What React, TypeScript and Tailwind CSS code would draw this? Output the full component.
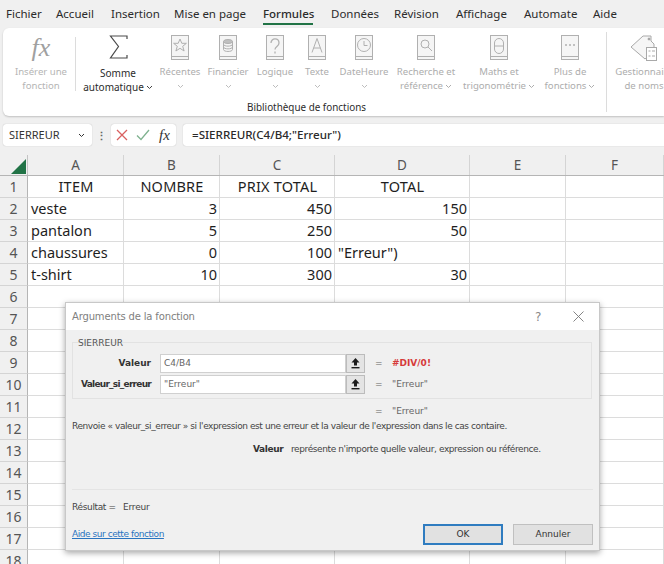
import React from "react";

const FONT = "[font-family:'Noto_Sans','Open_Sans',sans-serif]";
const SERIF = "[font-family:'Liberation_Serif',serif]";
const TAHOMA = "[font-family:'DejaVu_Sans','Noto_Sans',sans-serif]";

function Chevron({ className = "" }: { className?: string }) {
  return (
    <svg width="7" height="5" viewBox="0 0 7 5" className={className} fill="none" stroke="currentColor" strokeWidth="1">
      <path d="M1 1l2.5 2.5L6 1" />
    </svg>
  );
}

function Book({ children }: { children?: React.ReactNode }) {
  return (
    <svg width="20" height="26" viewBox="0 0 20 26" fill="none" stroke="#b0b0b0" strokeWidth="1">
      <rect x="1.5" y="0.5" width="17" height="24" fill="#f5f5f5" />
      <path d="M1.5 21.5h17" />
      {children}
    </svg>
  );
}

const tabs: [string, string][] = [
  ["Fichier", "w-[50px]"],
  ["Accueil", "w-[55px]"],
  ["Insertion", "w-[63px]"],
  ["Mise en page", "w-[89px]"],
  ["Formules", "w-[68px]"],
  ["Données", "w-[63px]"],
  ["Révision", "w-[62px]"],
  ["Affichage", "w-[68px]"],
  ["Automate", "w-[69px]"],
  ["Aide", "w-[40px]"],
];

function Lib({
  w,
  icon,
  l1,
  l2,
  caret,
}: {
  w: string;
  icon: React.ReactNode;
  l1: string;
  l2?: string;
  caret?: boolean;
}) {
  return (
    <div className={`${w} flex flex-col items-center shrink-0 pt-[7px] text-[9.6px] leading-[14px] text-[#adadad] whitespace-nowrap`}>
      <div className="h-[26px] flex items-center justify-center">{icon}</div>
      <div className="mt-[4px]">{l1}</div>
      {l2 ? (
        <div className="flex items-center gap-[2px]">
          {l2}
          {caret && <Chevron className="text-[#adadad]" />}
        </div>
      ) : (
        <Chevron className="mt-[5px] text-[#bdbdbd]" />
      )}
    </div>
  );
}

const cols = ["w-[96px]", "w-[96px]", "w-[115px]", "w-[135px]", "w-[96px]", "w-[98px]"];
const rows: [string, string, string, string][] = [
  ["ITEM", "NOMBRE", "PRIX TOTAL", "TOTAL"],
  ["veste", "3", "450", "150"],
  ["pantalon", "5", "250", "50"],
  ["chaussures", "0", "100", "\"Erreur\")"],
  ["t-shirt", "10", "300", "30"],
];

function UpBtn() {
  return (
    <div className="w-[19px] h-[19px] bg-[#e4e4e4] border border-[#bcbcbc] flex items-center justify-center shrink-0">
      <svg width="9" height="11" viewBox="0 0 9 11" fill="#1c1c1c">
        <path d="M4.5 0L8.5 4.5H6V7.5H3V4.5H0.5Z" />
        <rect x="0.5" y="9" width="8" height="1.4" />
      </svg>
    </div>
  );
}

export default function App() {
  return (
    <div className={`relative w-[664px] h-[564px] overflow-hidden bg-[#f0f0f0] ${FONT}`}>
      {/* tabs */}
      <div className="flex h-[28px] pl-[6px] text-[11.5px] text-[#2b2b2b] items-center">
        {tabs.map(([t, w]) => (
          <div key={t} className={`${w} shrink-0 relative h-full flex items-center`}>
            <span className={t === "Formules" ? "font-medium" : ""}>{t}</span>
            {t === "Formules" && <div className="absolute left-0 bottom-[3px] w-[50px] h-[2px] bg-[#217346]" />}
          </div>
        ))}
      </div>

      {/* ribbon */}
      <div className="ml-[3px] h-[88px] bg-white rounded-l-[6px] flex relative shadow-[0_1px_2px_rgba(0,0,0,0.2)]">
        <div className="w-[72px] pl-[4px] flex flex-col items-center shrink-0 pt-[7px] text-[9.6px] leading-[14px] text-[#b5b5b5]">
          <div className={`h-[26px] text-[26px] leading-[26px] italic text-[#a0a0a0] ${SERIF}`}>fx</div>
          <div className="mt-[4px]">Insérer une</div>
          <div>fonction</div>
        </div>
        <div className="w-px h-[54px] mt-[9px] bg-[#dcdcdc] shrink-0" />
        <div className="w-[84px] flex flex-col items-center shrink-0 pt-[7px] text-[10px] leading-[14px] text-[#2b2b2b]">
          <svg width="19" height="24" viewBox="0 0 19 24" fill="none" stroke="#4a4a4a" strokeWidth="1.2">
            <path d="M18 4V1H1.500l8 10.500L1.500 23H18v-3" />
          </svg>
          <div className="mt-[7px]">Somme</div>
          <div className="flex items-center gap-[2px]">
            automatique
            <Chevron className="text-[#444]" />
          </div>
        </div>
        <Lib
          w="w-[40px]"
          l1="Récentes"
          icon={
            <Book>
              <path d="M10 4l1.800 4.300h4.600l-3.700 3 1.400 4.700L10 13.300 5.900 16l1.400-4.700-3.700-3h4.600z" />
            </Book>
          }
        />
        <Lib
          w="w-[56px]"
          l1="Financier"
          icon={
            <Book>
              <ellipse cx="10" cy="6.500" rx="4.500" ry="2" fill="#c0c0c0" />
              <path d="M5.500 6.500v8c0 2.600 9 2.600 9 0v-8M5.500 9.200c0 2.600 9 2.600 9 0M5.500 11.900c0 2.600 9 2.600 9 0" />
            </Book>
          }
        />
        <Lib
          w="w-[38px]"
          l1="Logique"
          icon={
            <Book>
              <path d="M6 8C6 2.500 14 2.500 14 8c0 3.500-4 3.500-4 6.500M10 16.500v2" strokeWidth="1.300" />
            </Book>
          }
        />
        <Lib
          w="w-[46px]"
          l1="Texte"
          icon={
            <Book>
              <path d="M5 17.500L10 3.500l5 14M6.800 13h6.400" />
            </Book>
          }
        />
        <Lib
          w="w-[48px]"
          l1="DateHeure"
          icon={
            <Book>
              <circle cx="10" cy="10" r="6.500" />
              <path d="M10 6v4.500h3.500" />
            </Book>
          }
        />
        <Lib
          w="w-[76px]"
          l1="Recherche et"
          l2="référence"
          caret
          icon={
            <Book>
              <circle cx="9" cy="9" r="4" />
              <path d="M12 12l4 4" />
            </Book>
          }
        />
        <Lib
          w="w-[70px]"
          l1="Maths et"
          l2="trigonométrie"
          caret
          icon={
            <Book>
              <rect x="5.500" y="3.500" width="9" height="15" rx="4.500" />
              <path d="M5.500 11h9" />
            </Book>
          }
        />
        <Lib
          w="w-[72px]"
          l1="Plus de"
          l2="fonctions"
          caret
          icon={
            <Book>
              <path d="M5 10h2M9 10h2M13 10h2" strokeWidth="1.500" />
            </Book>
          }
        />
        <div className="w-px h-[80px] mt-[4px] bg-[#dcdcdc] shrink-0" />
        <div className="w-[66px] pl-[8px] flex flex-col items-center shrink-0 pt-[7px] text-[9.6px] leading-[14px] text-[#adadad] whitespace-nowrap">
          <svg width="28" height="26" viewBox="0 0 28 26" fill="none" stroke="#a9a9a9" strokeWidth="1">
            <path d="M1 12L13 1h8v5l3 3v7l-9 8z" fill="#f6f6f6" />
            <circle cx="19" cy="4" r="1" fill="#888" />
            <rect x="16.500" y="12.500" width="10" height="13" fill="#fff" />
            <path d="M18.500 16h2M22 16h3M18.500 21h2M22 21h3" />
          </svg>
          <div className="mt-[4px]">Gestionnaire</div>
          <div>de noms</div>
        </div>
        <div className="absolute left-[244px] top-[72px] text-[9.900px] leading-[14px] text-[#2b2b2b]">Bibliothèque de fonctions</div>
      </div>

      {/* formula bar */}
      <div className="flex items-center h-[22px] mt-[8px] pl-[3px] text-[11px] text-[#333]">
        <div className="w-[89px] h-full bg-white rounded-[3px] shadow-[0_0_1px_rgba(0,0,0,0.3)] flex items-center justify-between pl-[6px] pr-[7px] shrink-0">
          SIERREUR
          <Chevron className="text-[#333]" />
        </div>
        <div className="w-[19px] text-center text-[#666] font-bold leading-none shrink-0">⋮</div>
        <div className="w-[65px] h-full bg-white rounded-[3px] shadow-[0_0_1px_rgba(0,0,0,0.3)] flex items-center shrink-0">
          <svg width="12" height="12" viewBox="0 0 12 12" className="ml-[5px]" stroke="#d9605f" strokeWidth="1.300" fill="none">
            <path d="M1 1l10 10M11 1L1 11" />
          </svg>
          <svg width="14" height="12" viewBox="0 0 14 12" className="ml-[8px]" stroke="#7fb28f" strokeWidth="1.300" fill="none">
            <path d="M1 6.500l4 4L13 1" />
          </svg>
          <span className={`ml-[9px] text-[15px] italic text-[#333] ${SERIF}`}>fx</span>
        </div>
        <div className="w-[7px] shrink-0" />
        <div className="flex-1 h-full bg-white rounded-l-[3px] shadow-[0_0_1px_rgba(0,0,0,0.3)] flex items-center pl-[9px] text-[11.600px] font-medium text-[#2a2a2a]">
          =SIERREUR(C4/B4;"Erreur")
        </div>
      </div>

      {/* sheet */}
      <div className="mt-[9px] bg-white text-[14.500px] text-[#1e1e1e]">
        <div className="flex h-[21px] bg-[#f0f0f0] border-b border-[#b5b5b5] text-[13.500px] text-[#555]">
          <div className="w-[28px] shrink-0 border-r border-[#c4c4c4] flex items-end justify-end pr-[1px] pb-[1px]">
            <div className="w-0 h-0 border-l-[15px] border-l-transparent border-b-[15px] border-b-[#217346]" />
          </div>
          {["A", "B", "C", "D", "E", "F"].map((c, i) => (
            <div key={c} className={`${cols[i]} shrink-0 border-r border-[#d4d4d4] flex items-center justify-center`}>{c}</div>
          ))}
        </div>
        {Array.from({ length: 18 }, (_, r) => (
          <div key={r} className="flex h-[22px]">
            <div className="w-[28px] shrink-0 bg-[#f0f0f0] border-r border-[#b5b5b5] border-b border-b-[#d4d4d4] flex items-center justify-center text-[14px] text-[#555]">
              {r + 1}
            </div>
            {cols.map((w, c) => {
              const v = r < 5 && c < 4 ? rows[r][c] : "";
              const center = r === 0;
              const right = r > 0 && (c === 1 || c === 2 || (c === 3 && v !== "\"Erreur\")"));
              return (
                <div
                  key={c}
                  className={`${w} shrink-0 border-r border-b border-[#dcdcdc] flex items-center pl-[3px] pr-[2px] whitespace-nowrap ${center ? "justify-center tracking-[0.2px]" : right ? "justify-end" : "justify-start"}`}
                >
                  {v}
                </div>
              );
            })}
          </div>
        ))}
      </div>

      {/* dialog */}
      <div className={`absolute left-[65px] top-[302px] w-[535px] h-[249px] bg-[#f0f0f0] border border-[#c8c8c8] shadow-[0_2px_6px_rgba(0,0,0,0.35)] flex flex-col text-[9px] text-[#444] ${TAHOMA}`}>
        <div className="h-[27px] bg-white flex items-center pl-[6px] text-[10px] tracking-[-0.15px] text-[#808080] shrink-0 relative">
          Arguments de la fonction
          <span className="absolute left-[469px] top-[5px] text-[12px] text-[#888]">?</span>
          <svg width="11" height="11" viewBox="0 0 11 11" className="absolute left-[507px] top-[8px]" stroke="#777" strokeWidth="0.900" fill="none">
            <path d="M0.500 0.500l10 10M10.500 0.500l-10 10" />
          </svg>
        </div>
        <div className="ml-[6px] mr-[7px] mt-[12px] h-[57px] border border-[#e2e2e2] relative shrink-0 pt-[11px]">
          <div className="absolute left-[5px] top-[-6px] text-[#555]">SIERREUR</div>
          <div className="flex items-center h-[19px]">
            <div className="w-[87px] text-right font-bold text-[#333] pr-[9px] shrink-0">Valeur</div>
            <div className="w-[186px] h-[19px] bg-white border border-[#d0d0d0] flex items-center pl-[3px] text-[#666] shrink-0">C4/B4</div>
            <UpBtn />
            <div className="ml-[10px] w-[17px] text-[#666]">=</div>
            <div className="text-[#d63a3a] font-bold">#DIV/0!</div>
          </div>
          <div className="flex items-center h-[19px] mt-[2px]">
            <div className="w-[87px] text-right font-bold text-[#333] pr-[9px] shrink-0 tracking-[-0.75px]">Valeur_si_erreur</div>
            <div className="w-[186px] h-[19px] bg-white border border-[#d0d0d0] flex items-center pl-[3px] text-[#666] shrink-0">"Erreur"</div>
            <UpBtn />
            <div className="ml-[10px] w-[17px] text-[#666]">=</div>
            <div className="text-[#666]">"Erreur"</div>
          </div>
        </div>
        <div className="flex h-[12px] mt-[7px] pl-[309px] items-center text-[#666] shrink-0">
          <span className="w-[17px]">=</span>
          <span>"Erreur"</span>
        </div>
        <div className="h-[13px] mt-[2px] pl-[6px] flex items-center whitespace-nowrap tracking-[-0.42px] shrink-0">
          Renvoie « valeur_si_erreur » si l'expression est une erreur et la valeur de l'expression dans le cas contaire.
        </div>
        <div className="flex h-[14px] mt-[10px] pl-[187px] items-center whitespace-nowrap tracking-[-0.4px] shrink-0">
          <span className="font-bold text-[#333] w-[38px]">Valeur</span>
          représente n'importe quelle valeur, expression ou référence.
        </div>
        <div className="mx-[6px] mt-[32px] border-t border-[#e4e4e4] shrink-0" />
        <div className="flex h-[14px] mt-[11px] pl-[6px] items-center shrink-0">
          <span className="w-[51px] tracking-[-0.35px]">Résultat =</span>
          <span className="tracking-[-0.2px]">Erreur</span>
        </div>
        <div className="flex items-center mt-[9px] pl-[6px] pr-[6px]">
          <a className="text-[#2a74c0] underline flex-1 tracking-[-0.45px]">Aide sur cette fonction</a>
          <div className="w-[80px] h-[21px] bg-[#e1e1e1] border-2 border-[#2f7cc0] flex items-center justify-center text-[#333]">OK</div>
          <div className="w-[80px] h-[21px] ml-[10px] bg-[#e1e1e1] border border-[#c0c0c0] flex items-center justify-center text-[#333]">Annuler</div>
        </div>
      </div>
    </div>
  );
}
